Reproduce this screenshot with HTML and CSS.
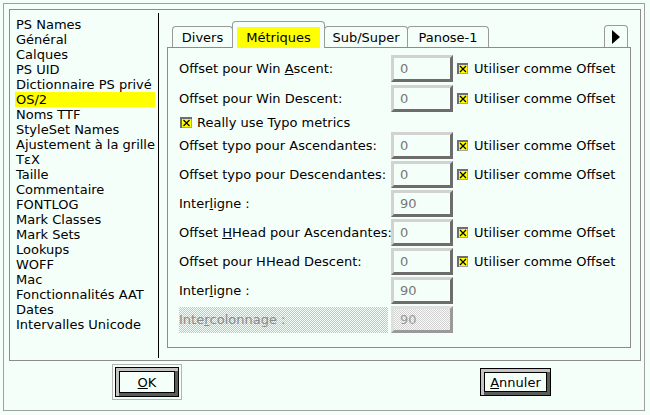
FILE: index.html
```html
<!DOCTYPE html>
<html lang="fr">
<head>
<meta charset="utf-8">
<title>Infos Fonte</title>
<link rel="stylesheet" href="styles.css">
</head>
<body>
<div class="window">
  <div class="group">
    <ul class="list">
      <li>PS Names</li>
      <li>Général</li>
      <li>Calques</li>
      <li>PS UID</li>
      <li>Dictionnaire PS privé</li>
      <li class="sel">OS/2</li>
      <li>Noms TTF</li>
      <li>StyleSet Names</li>
      <li>Ajustement à la grille</li>
      <li>TεX</li>
      <li>Taille</li>
      <li>Commentaire</li>
      <li>FONTLOG</li>
      <li>Mark Classes</li>
      <li>Mark Sets</li>
      <li>Lookups</li>
      <li>WOFF</li>
      <li>Mac</li>
      <li>Fonctionnalités AAT</li>
      <li>Dates</li>
      <li>Intervalles Unicode</li>
    </ul>
    <div class="divider"></div>
    <div class="tabs-area">
      <div class="tabbar">
        <div class="tab t-divers">Divers</div>
        <div class="tab active t-metr"><span class="hl">Métriques</span></div>
        <div class="tab t-sub">Sub/Super</div>
        <div class="tab t-pan">Panose-1</div>
        <div class="tab arrow"><svg width="8" height="14" viewBox="0 0 8 14"><polygon points="0,0 8,7 0,14" fill="#000"/></svg></div>
      </div>
      <div class="panel">
        <div class="rows">
          <div class="row first">
            <span class="lbl">Offset pour Win <u>A</u>scent:</span>
            <span class="field">0</span>
            <svg class="cb" width="11" height="11" viewBox="0 0 11 11"><rect width="11" height="11" fill="#a6a6a6"/><rect width="11" height="2" fill="#6e6e6e"/><rect width="2" height="11" fill="#6e6e6e"/><rect x="2" y="2" width="8" height="8" fill="#ffff00"/><path d="M3 3L9 9M9 3L3 9" stroke="#000" stroke-width="1.2"/></svg>
            <span class="opt">Utiliser comme Offset</span>
          </div>
          <div class="row">
            <span class="lbl">Offset pour Win Descent:</span>
            <span class="field">0</span>
            <svg class="cb" width="11" height="11" viewBox="0 0 11 11"><rect width="11" height="11" fill="#a6a6a6"/><rect width="11" height="2" fill="#6e6e6e"/><rect width="2" height="11" fill="#6e6e6e"/><rect x="2" y="2" width="8" height="8" fill="#ffff00"/><path d="M3 3L9 9M9 3L3 9" stroke="#000" stroke-width="1.2"/></svg>
            <span class="opt">Utiliser comme Offset</span>
          </div>
          <div class="row check">
            <svg class="cb2" width="12" height="11" viewBox="0 0 12 11"><rect width="12" height="11" fill="#a6a6a6"/><rect width="12" height="2" fill="#6e6e6e"/><rect width="2" height="11" fill="#6e6e6e"/><rect x="2" y="2" width="9" height="8" fill="#ffff00"/><path d="M3.5 3L9.5 9M9.5 3L3.5 9" stroke="#000" stroke-width="1.2"/></svg>
            <span class="opt2">Really use Typo metrics</span>
          </div>
          <div class="row">
            <span class="lbl">Offset typo pour Ascendantes:</span>
            <span class="field">0</span>
            <svg class="cb" width="11" height="11" viewBox="0 0 11 11"><rect width="11" height="11" fill="#a6a6a6"/><rect width="11" height="2" fill="#6e6e6e"/><rect width="2" height="11" fill="#6e6e6e"/><rect x="2" y="2" width="8" height="8" fill="#ffff00"/><path d="M3 3L9 9M9 3L3 9" stroke="#000" stroke-width="1.2"/></svg>
            <span class="opt">Utiliser comme Offset</span>
          </div>
          <div class="row">
            <span class="lbl">Offset typo pour Descendantes:</span>
            <span class="field">0</span>
            <svg class="cb" width="11" height="11" viewBox="0 0 11 11"><rect width="11" height="11" fill="#a6a6a6"/><rect width="11" height="2" fill="#6e6e6e"/><rect width="2" height="11" fill="#6e6e6e"/><rect x="2" y="2" width="8" height="8" fill="#ffff00"/><path d="M3 3L9 9M9 3L3 9" stroke="#000" stroke-width="1.2"/></svg>
            <span class="opt">Utiliser comme Offset</span>
          </div>
          <div class="row">
            <span class="lbl">Inter<u>l</u>igne :</span>
            <span class="field">90</span>
          </div>
          <div class="row">
            <span class="lbl">Offset <u>H</u>Head pour Ascendantes:</span>
            <span class="field">0</span>
            <svg class="cb" width="11" height="11" viewBox="0 0 11 11"><rect width="11" height="11" fill="#a6a6a6"/><rect width="11" height="2" fill="#6e6e6e"/><rect width="2" height="11" fill="#6e6e6e"/><rect x="2" y="2" width="8" height="8" fill="#ffff00"/><path d="M3 3L9 9M9 3L3 9" stroke="#000" stroke-width="1.2"/></svg>
            <span class="opt">Utiliser comme Offset</span>
          </div>
          <div class="row">
            <span class="lbl">Offset pour HHead Descent:</span>
            <span class="field">0</span>
            <svg class="cb" width="11" height="11" viewBox="0 0 11 11"><rect width="11" height="11" fill="#a6a6a6"/><rect width="11" height="2" fill="#6e6e6e"/><rect width="2" height="11" fill="#6e6e6e"/><rect x="2" y="2" width="8" height="8" fill="#ffff00"/><path d="M3 3L9 9M9 3L3 9" stroke="#000" stroke-width="1.2"/></svg>
            <span class="opt">Utiliser comme Offset</span>
          </div>
          <div class="row">
            <span class="lbl">Inter<u>l</u>igne :</span>
            <span class="field">90</span>
          </div>
          <div class="row">
            <span class="lbl dis">Inte<u>r</u>colonnage :</span>
            <span class="field fdis">90</span>
          </div>
        </div>
      </div>
    </div>
  </div>
  <div class="buttons">
    <div class="ring"><div class="btn ok"><span><u>O</u>K</span></div></div>
    <div class="btn cancel"><span><u>A</u>nnuler</span></div>
  </div>
</div>
</body>
</html>
```

FILE: styles.css
```css
html, body {
  margin: 0;
  background: #f5fffa;
}
body {
  font-family: "DejaVu Sans", "Liberation Sans", sans-serif;
  font-size: 13px;
  color: #000;
}
.window {
  margin: 3px;
  width: 642px;
  height: 408px;
  box-sizing: border-box;
  border: 1px solid #a0a0a0;
  padding: 5px 3px 0 5px;
}
.group {
  display: flex;
  height: 352px;
  box-sizing: border-box;
  border: 1px solid #8c8c8c;
}
.list {
  list-style: none;
  margin: 0;
  padding: 7px 3px 0 5px;
  width: 148px;
  box-sizing: border-box;
  flex: 0 0 auto;
}
.list li {
  height: 15px;
  line-height: 15px;
  padding-left: 1px;
  white-space: nowrap;
}
.list li.sel {
  background: #ffff00;
}
.divider {
  width: 1px;
  background: #000;
  margin: 3px 0 2px;
  flex: 0 0 auto;
}
.tabs-area {
  margin: 11px 0 0 8px;
  width: 464px;
  display: flex;
  flex-direction: column;
}
.tabbar {
  display: flex;
  align-items: flex-end;
  height: 26px;
  padding-left: 5px;
  position: relative;
  z-index: 1;
}
.tab {
  box-sizing: border-box;
  height: 21px;
  border: 1px solid #9a9a9a;
  border-bottom: none;
  border-radius: 4px 4px 0 0;
  background: #f5fffa;
  display: flex;
  align-items: center;
  justify-content: center;
  margin-right: -1px;
  white-space: nowrap;
}
.t-divers { width: 61px; }
.t-metr { width: 93px; }
.t-sub { width: 84px; }
.t-pan { width: 82px; }
.tab.active {
  height: 27px;
  margin-bottom: -1px;
  align-items: stretch;
}
.hl {
  background: #ffff00;
  flex: 1;
  margin: 5px 4px 0;
  display: flex;
  align-items: center;
  justify-content: center;
  padding-bottom: 1px;
}
.tab.arrow {
  width: 24px;
  height: 22px;
  margin-left: auto;
  margin-right: 3px;
}
.panel {
  height: 301px;
  box-sizing: border-box;
  border: 1px solid #8c8c8c;
  padding: 7px 0 0 11px;
}
.rows {
  display: flex;
  flex-direction: column;
  gap: 2px;
}
.row {
  display: flex;
  align-items: center;
  height: 27px;
  white-space: nowrap;
}
.row.first {
  margin-bottom: 1px;
}
.row.check {
  height: 16px;
}
.lbl {
  width: 212px;
  flex: 0 0 auto;
}
.field {
  width: 62px;
  height: 27px;
  box-sizing: border-box;
  border: 3px solid;
  border-color: #d2d2d2 #6c6c6c #6c6c6c #d2d2d2;
  padding-left: 6px;
  color: #777;
  display: flex;
  align-items: center;
  flex: 0 0 auto;
}
.cb {
  margin-left: 4px;
  flex: 0 0 auto;
}
.opt {
  margin-left: 6px;
}
.cb2 {
  margin-left: 1px;
  flex: 0 0 auto;
}
.opt2 {
  margin-left: 5px;
}
.lbl.dis {
  width: 209px;
  margin-right: 3px;
  height: 26px;
  display: flex;
  align-items: center;
  color: #8a8a8a;
  background-image: repeating-conic-gradient(#c4c4c4 0 25%, #f5fffa 0 50%);
  background-size: 2px 2px;
}
.field.fdis {
  color: #9a9a9a;
  border-color: #e0e0e0 #9a9a9a #9a9a9a #e0e0e0;
  background-image: repeating-conic-gradient(#d0d0d0 0 25%, #f5fffa 0 50%);
  background-size: 2px 2px;
}
.buttons {
  display: flex;
  align-items: center;
  padding-left: 103px;
  margin-top: 3px;
}
.ring {
  border: 1px solid #b4b4b4;
  padding: 2px;
}
.btn {
  box-sizing: border-box;
  border: 1px solid #000;
  box-shadow: inset 3px 3px 0 #c4c4c4, inset -3px -3px 0 #5c5c5c, inset 0 0 0 4px #000;
  background: #f5fffa;
  display: flex;
  align-items: center;
  justify-content: center;
}
.ok {
  width: 64px;
  height: 30px;
}
.cancel {
  width: 71px;
  height: 28px;
  margin-left: 298px;
}
```
